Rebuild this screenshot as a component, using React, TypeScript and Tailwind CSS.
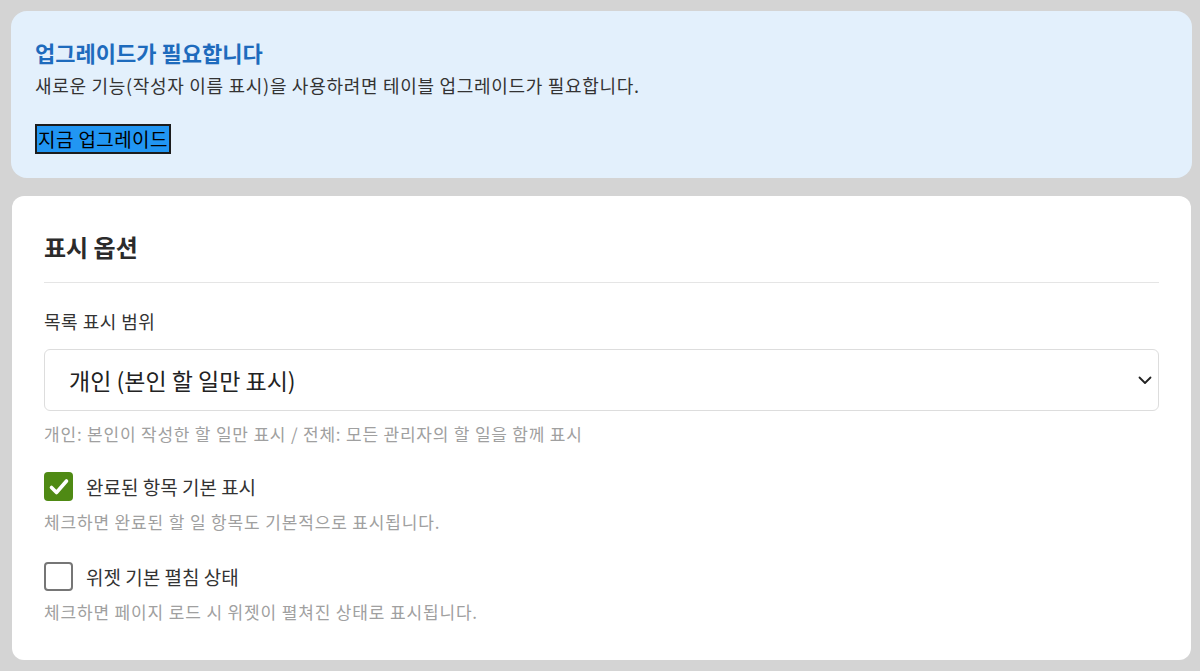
const font = "font-['Noto_Sans_CJK_KR','Noto_Sans',sans-serif]";

function Checkbox({ checked }: { checked: boolean }) {
  return checked ? (
    <span className="flex h-[29px] w-[29px] shrink-0 items-center justify-center rounded-[4px] bg-[#4f8a14]">
      <svg width="22" height="22" viewBox="0 0 22 22" fill="none">
        <path d="M3.5 11.5l5 5L18.5 5" stroke="white" strokeWidth="3.6" strokeLinecap="round" strokeLinejoin="round" />
      </svg>
    </span>
  ) : (
    <span className="h-[29px] w-[29px] shrink-0 rounded-[4px] border-2 border-[#767676] bg-white" />
  );
}

export default function App() {
  return (
    <div className={`min-h-[671px] bg-[#d4d4d4] pl-[11px] pr-[8px] pt-[11px] ${font}`}>
      <section className="rounded-[16px] bg-[#e3f0fc] px-6 pb-6 pt-[27px]">
        <h1 className="mb-[7px] text-[22px] font-bold leading-[28px] text-[#1e6bbd]">업그레이드가 필요합니다</h1>
        <p className="text-[18px] leading-[24px] tracking-[0.7px] text-[#333333]">
          새로운 기능(작성자 이름 표시)을 사용하려면 테이블 업그레이드가 필요합니다.
        </p>
        <button className="mt-[27px] h-[30px] border-2 border-[#1c1c1c] bg-[#2196f3] px-[1px] text-[19px] leading-[24px] tracking-[0.4px] text-black">
          지금 업그레이드
        </button>
      </section>

      <section className="ml-[1px] mr-[1px] mt-[18px] rounded-[12px] bg-white px-8 pb-[38px] pt-9">
        <h2 className="border-b border-[#e5e5e5] pb-5 text-[24px] font-bold leading-[30px] text-[#2b2b2b]">표시 옵션</h2>

        <label className="mt-[26px] block text-[18px] leading-[24px] tracking-[0.5px] text-[#333333]">목록 표시 범위</label>
        <div className="mt-4 flex h-[62px] items-center justify-between rounded-[6px] border border-[#dddddd] pl-6 pr-[6px]">
          <span className="text-[23px] leading-[30px] text-[#222222]">개인 (본인 할 일만 표시)</span>
          <svg width="14" height="9" viewBox="0 0 14 9" fill="none">
            <path d="M1.5 1.5l5.5 5.5 5.5-5.5" stroke="#222" strokeWidth="1.8" strokeLinecap="round" strokeLinejoin="round" />
          </svg>
        </div>
        <p className="mt-[13px] text-[17px] leading-[20px] tracking-[0.8px] text-[#a0a0a0]">
          개인: 본인이 작성한 할 일만 표시 / 전체: 모든 관리자의 할 일을 함께 표시
        </p>

        <div className="mt-[28px] flex items-center gap-[13px]">
          <Checkbox checked />
          <span className="text-[19px] leading-[28px] text-[#333333]">완료된 항목 기본 표시</span>
        </div>
        <p className="mt-[11px] text-[17px] leading-[20px] tracking-[0.85px] text-[#a0a0a0]">
          체크하면 완료된 할 일 항목도 기본적으로 표시됩니다.
        </p>

        <div className="mt-[30px] flex items-center gap-[13px]">
          <Checkbox checked={false} />
          <span className="text-[19px] leading-[28px] text-[#333333]">위젯 기본 펼침 상태</span>
        </div>
        <p className="mt-[11px] text-[17px] leading-[20px] tracking-[0.85px] text-[#a0a0a0]">
          체크하면 페이지 로드 시 위젯이 펼쳐진 상태로 표시됩니다.
        </p>
      </section>
    </div>
  );
}
